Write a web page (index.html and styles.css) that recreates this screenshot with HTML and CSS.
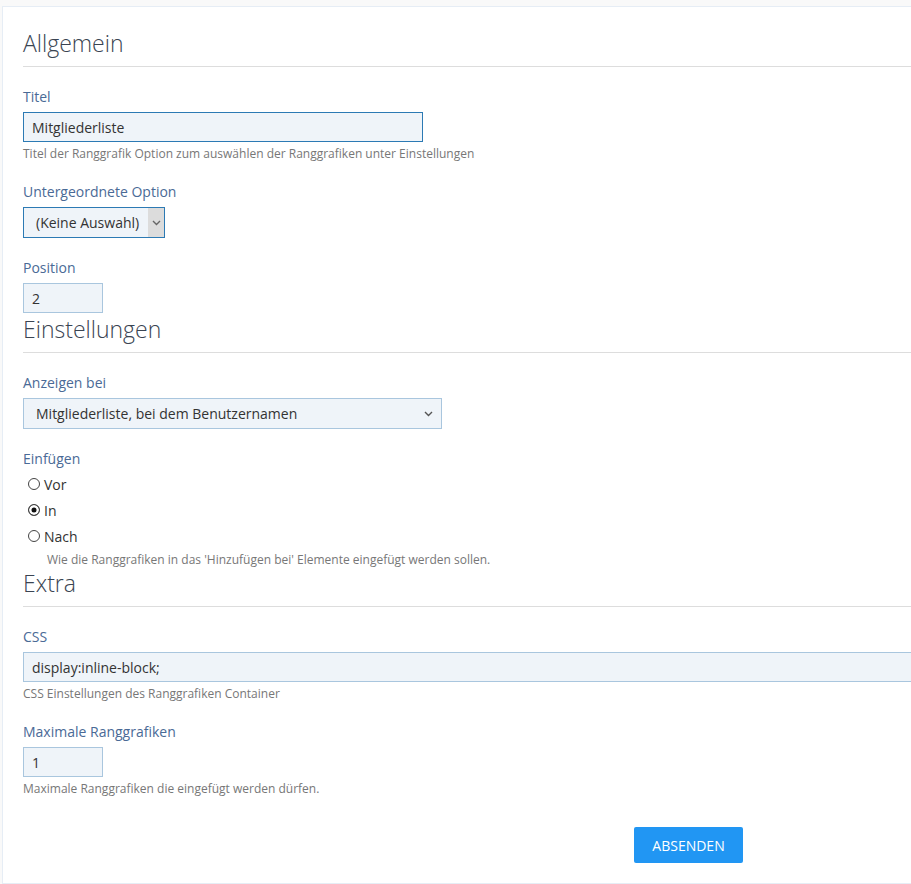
FILE: index.html
```html
<!DOCTYPE html>
<html lang="de">
<head>
    <meta charset="UTF-8">
    <meta name="viewport" content="width=device-width, initial-scale=1.0">
    <title>Ranggrafik Option</title>
    <link rel="stylesheet" href="styles.css">
</head>
<body>
    <form class="card">
        <fieldset class="section">
            <h3 class="section-title">Allgemein</h3>

            <div class="form-group">
                <label class="control-label" for="title">Titel</label>
                <input class="form-control wide focus" id="title" type="text" value="Mitgliederliste">
                <p class="help">Titel der Ranggrafik Option zum auswählen der Ranggrafiken unter Einstellungen</p>
            </div>

            <div class="form-group">
                <label class="control-label" for="parent">Untergeordnete Option</label>
                <div class="select-wrap small focus">
                    <select class="form-select" id="parent">
                        <option>(Keine Auswahl)</option>
                    </select>
                    <span class="select-arrow boxed">
                        <svg width="9" height="6" viewBox="0 0 9 6"><path d="M1 1l3.5 3.5L8 1" fill="none" stroke="#666" stroke-width="1.4"/></svg>
                    </span>
                </div>
            </div>

            <div class="form-group">
                <label class="control-label" for="position">Position</label>
                <input class="form-control short" id="position" type="text" value="2">
            </div>
        </fieldset>

        <fieldset class="section">
            <h3 class="section-title">Einstellungen</h3>

            <div class="form-group">
                <label class="control-label" for="show-at">Anzeigen bei</label>
                <div class="select-wrap medium">
                    <select class="form-select" id="show-at">
                        <option>Mitgliederliste, bei dem Benutzernamen</option>
                    </select>
                    <span class="select-arrow">
                        <svg width="9" height="6" viewBox="0 0 9 6"><path d="M1 1l3.5 3.5L8 1" fill="none" stroke="#555" stroke-width="1.4"/></svg>
                    </span>
                </div>
            </div>

            <div class="form-group">
                <span class="control-label">Einfügen</span>
                <div class="radio-list">
                    <label class="radio"><input type="radio" name="insert" value="before">Vor</label>
                    <label class="radio"><input type="radio" name="insert" value="in" checked>In</label>
                    <label class="radio"><input type="radio" name="insert" value="after">Nach</label>
                </div>
                <p class="help indented">Wie die Ranggrafiken in das 'Hinzufügen bei' Elemente eingefügt werden sollen.</p>
            </div>
        </fieldset>

        <fieldset class="section">
            <h3 class="section-title">Extra</h3>

            <div class="form-group">
                <label class="control-label" for="css">CSS</label>
                <input class="form-control" id="css" type="text" value="display:inline-block;">
                <p class="help">CSS Einstellungen des Ranggrafiken Container</p>
            </div>

            <div class="form-group">
                <label class="control-label" for="max">Maximale Ranggrafiken</label>
                <input class="form-control short" id="max" type="text" value="1">
                <p class="help">Maximale Ranggrafiken die eingefügt werden dürfen.</p>
            </div>
        </fieldset>

        <div class="form-actions">
            <button class="btn-primary" type="submit">Absenden</button>
        </div>
    </form>
</body>
</html>
```

FILE: styles.css
```css
* {
    margin: 0;
    padding: 0;
    box-sizing: border-box;
}

body {
    background-color: #f9f9f9;
    font-family: 'Open Sans', 'Noto Sans', sans-serif;
    font-size: 14px;
    color: #333;
    padding: 6px 0 0 2px;
    overflow: hidden;
}

.card {
    width: 1373px;
    background-color: #fff;
    border: 1px solid #e6edf5;
    padding: 23px 20px 20px;
}

.section {
    border: none;
}

.section-title {
    font-size: 23px;
    font-weight: 300;
    line-height: 26px;
    color: #3a4452;
    padding-bottom: 10px;
    border-bottom: 1px solid #ddd;
    margin-bottom: 20px;
}

.section + .section .section-title {
    margin-top: 3px;
}

.section:last-of-type .section-title {
    margin-top: 2px;
}

.form-group {
    margin-bottom: 20px;
}

.section .form-group:last-child {
    margin-bottom: 0;
}

.control-label {
    display: block;
    line-height: 20px;
    color: #4a6a96;
    margin-bottom: 5px;
}

.form-control {
    display: block;
    width: 100%;
    height: 30px;
    padding: 0 8px;
    font: inherit;
    color: #333;
    background-color: #eff4f9;
    border: 1px solid #a9c6de;
    outline: none;
}

.form-control.wide {
    width: 400px;
}

.form-control.short {
    width: 80px;
}

.focus,
.focus .form-select {
    border-color: #2c7ab4;
}

.help {
    font-size: 12px;
    line-height: 16px;
    color: #777;
    margin-top: 4px;
}

.help.indented {
    padding-left: 24px;
    margin-top: 3px;
}

/* selects: native arrow hidden, chevron drawn on top */
.select-wrap {
    position: relative;
    height: 31px;
}

.select-wrap.small {
    width: 142px;
}

.select-wrap.medium {
    width: 419px;
}

.form-select {
    appearance: none;
    width: 100%;
    height: 31px;
    padding: 0 12px;
    font: inherit;
    color: #333;
    background-color: #eff4f9;
    border: 1px solid #a9c6de;
    outline: none;
}

.select-arrow {
    position: absolute;
    top: 1px;
    right: 1px;
    bottom: 1px;
    width: 16px;
    display: flex;
    align-items: center;
    justify-content: center;
    pointer-events: none;
}

.select-arrow.boxed {
    background-color: #dcdcdc;
}

.select-wrap.medium .select-arrow {
    right: 6px;
}

.radio-list {
    padding-left: 5px;
    margin-top: -3px;
}

.radio {
    display: flex;
    align-items: center;
    gap: 4px;
    height: 26px;
    color: #333;
}

.radio input {
    appearance: none;
    width: 12px;
    height: 12px;
    border: 1px solid #444;
    border-radius: 50%;
    background-color: #fff;
}

.radio input:checked {
    background-color: #111;
    box-shadow: inset 0 0 0 2.5px #fff;
}

.form-actions {
    display: flex;
    justify-content: center;
    padding-top: 30px;
}

.btn-primary {
    height: 36px;
    padding: 0 18px;
    border: none;
    border-radius: 2px;
    background-color: #2196f3;
    color: #fff;
    font: inherit;
    font-size: 14px;
    text-transform: uppercase;
    cursor: pointer;
}
```
